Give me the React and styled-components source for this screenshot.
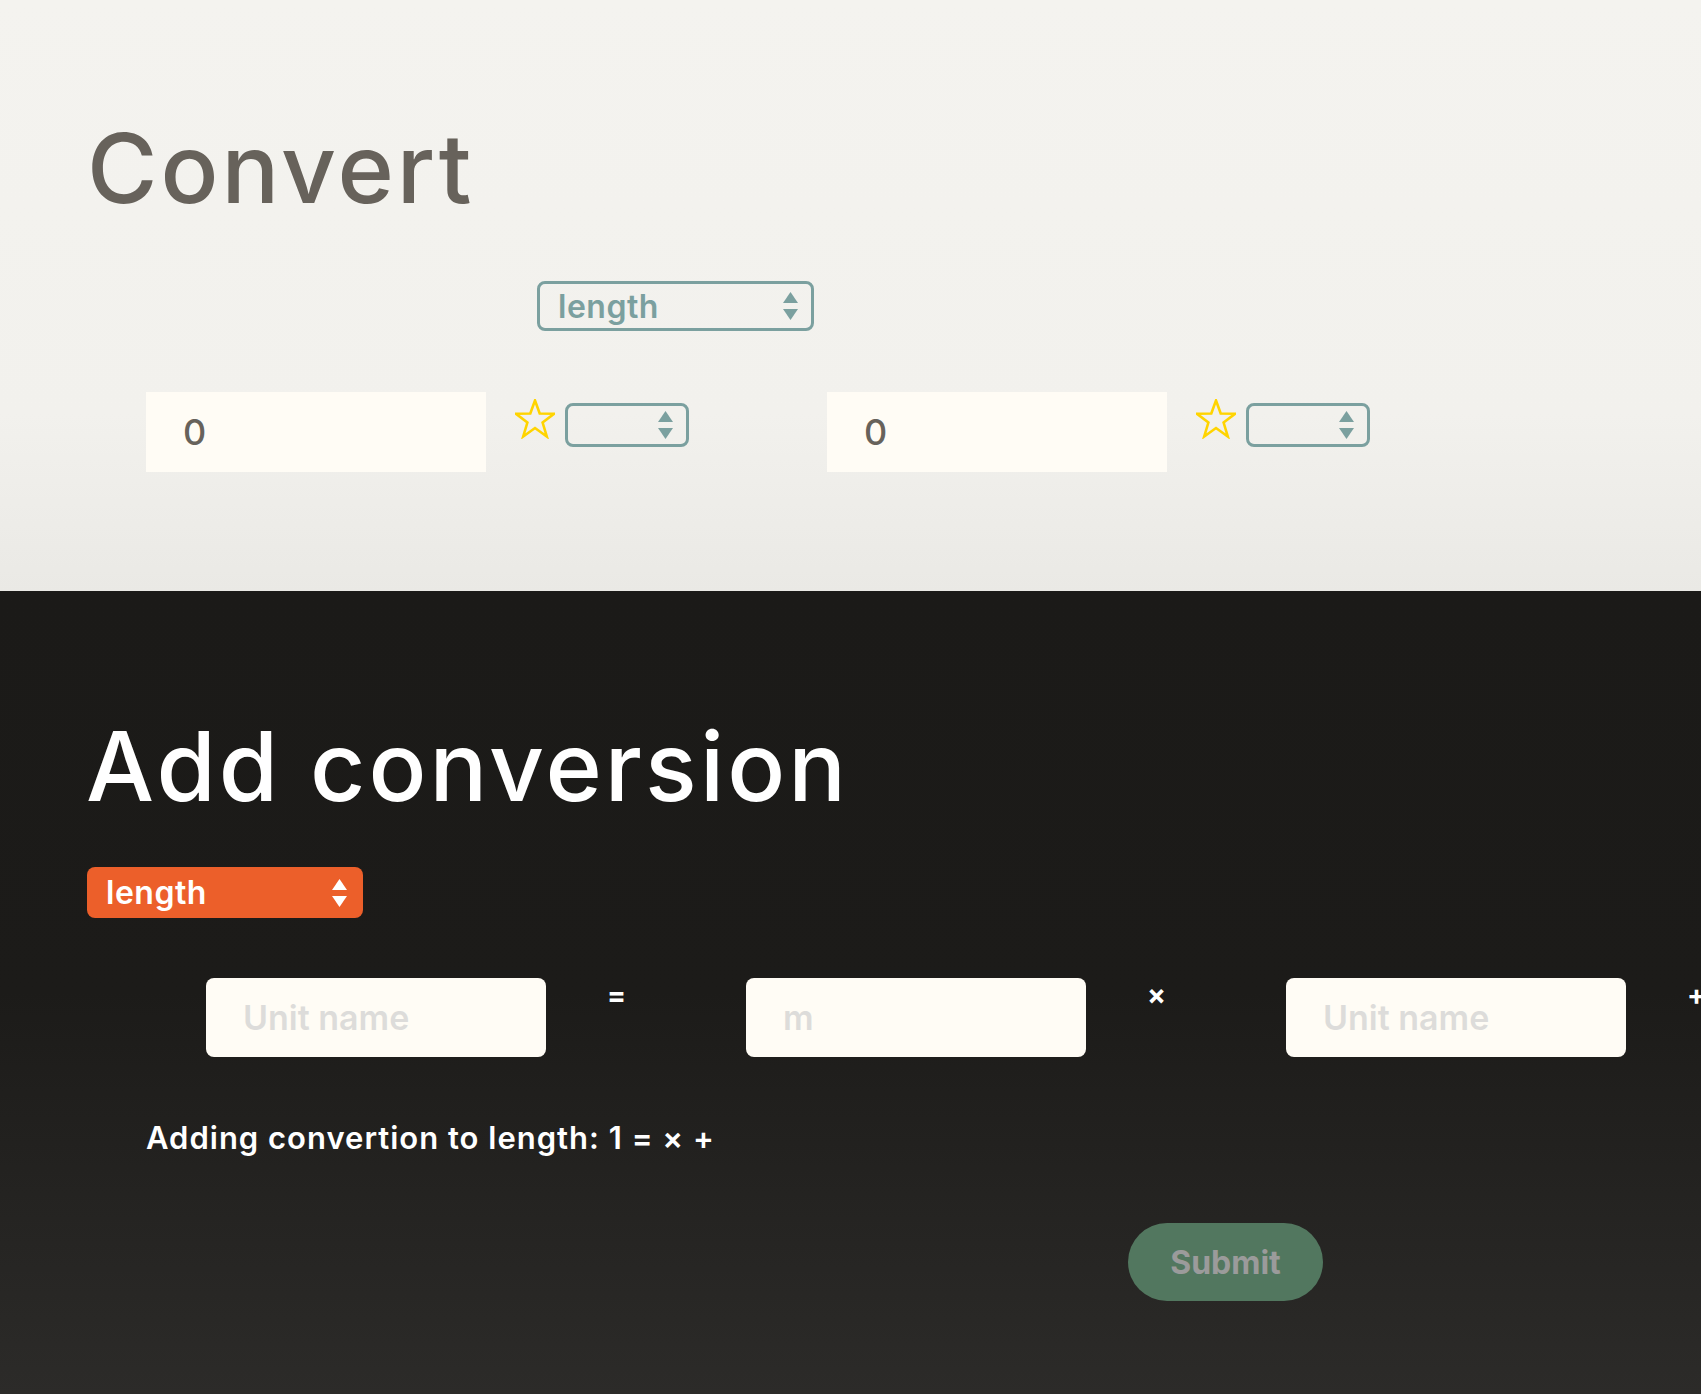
import React from "react";
import styled, { createGlobalStyle } from "styled-components";

const GlobalStyle = createGlobalStyle`
  body {
    margin: 0;
    font-family: Inter, "Noto Sans", sans-serif;
  }
  * {
    box-sizing: border-box;
  }
`;

const units = ["length", "mass", "time", "volume"];

const Star = () => (
  <StarIcon viewBox="0 0 40 40" aria-hidden="true">
    <polygon
      points="20,1.5 24.7,14.5 39,14.8 27.6,23.5 31.8,37.5 20,29 8.2,37.5 12.4,23.5 1,14.8 15.3,14.5"
      fill="none"
      stroke="#ffd400"
      strokeWidth="2.6"
      strokeLinejoin="miter"
    />
  </StarIcon>
);

const Arrows = ({ color }) => (
  <ArrowIcon viewBox="0 0 15 28" aria-hidden="true">
    <polygon points="7.5,0 15,11 0,11" fill={color} />
    <polygon points="0,17 15,17 7.5,28" fill={color} />
  </ArrowIcon>
);

const Dropdown = ({ variant = "outline", width, height, value, options = [] }) => (
  <SelectWrap $width={width} $height={height}>
    <Select $variant={variant} defaultValue={value}>
      {options.length === 0 && <option value=""></option>}
      {options.map((o) => (
        <option key={o} value={o}>
          {o}
        </option>
      ))}
    </Select>
    <Arrows color={variant === "filled" ? "#ffffff" : "#7ba09f"} />
  </SelectWrap>
);

const ConvertGroup = ({ last }) => (
  <Group $last={last}>
    <ValueInput defaultValue="0" />
    <StarButton>
      <Star />
    </StarButton>
    <Dropdown width={124} height={44} />
  </Group>
);

const App = () => {
  return (
    <>
      <GlobalStyle />
      <TopSection>
        <Heading>Convert</Heading>
        <CategoryRow>
          <Dropdown width={277} height={50} value="length" options={units} />
        </CategoryRow>
        <ConvertRow>
          <ConvertGroup />
          <ConvertGroup last />
        </ConvertRow>
      </TopSection>
      <BottomSection>
        <Heading $dark>Add conversion</Heading>
        <FilterRow>
          <Dropdown variant="filled" width={276} height={51} value="length" options={units} />
        </FilterRow>
        <ConversionRow>
          <UnitInput placeholder="Unit name" />
          <Operator>=</Operator>
          <UnitInput placeholder="m" />
          <Operator>×</Operator>
          <UnitInput placeholder="Unit name" />
          <Operator>+</Operator>
        </ConversionRow>
        <Summary>Adding convertion to length: 1 = × +</Summary>
        <SubmitButton type="button">Submit</SubmitButton>
      </BottomSection>
    </>
  );
};

export default App;

const TopSection = styled.section`
  height: 591px;
  padding: 120px 0 0 87px;
  background: linear-gradient(180deg, #f4f3ef 0%, #f2f1ed 70%, #eae9e5 100%);
`;

const BottomSection = styled.section`
  min-height: 803px;
  padding: 127px 0 93px 86px;
  background: linear-gradient(180deg, #1b1a18 0%, #1c1b19 50%, #2c2b29 100%);
  overflow: hidden;
`;

const Heading = styled.h1`
  margin: 0;
  font-size: 96px;
  line-height: 1;
  font-weight: 500;
  letter-spacing: 3.1px;
  color: ${(p) => (p.$dark ? "#ffffff" : "#67625b")};
`;

const CategoryRow = styled.div`
  margin: 65px 0 0 450px;
`;

const FilterRow = styled.div`
  margin: 53px 0 0 1px;
`;

const ConvertRow = styled.div`
  display: flex;
  margin: 61px 0 0 59px;
`;

const Group = styled.div`
  display: flex;
  align-items: flex-start;
  margin-right: ${(p) => (p.$last ? "0" : "138px")};
`;

const ValueInput = styled.input`
  width: 340px;
  height: 80px;
  padding: 0 0 0 37px;
  border: none;
  outline: none;
  background: #fffcf5;
  font-family: inherit;
  font-size: 36px;
  font-weight: 500;
  color: #67625b;
`;

const StarButton = styled.span`
  display: flex;
  margin: 7px 10px 0 29px;
`;

const StarIcon = styled.svg`
  width: 40px;
  height: 40px;
`;

const SelectWrap = styled.div`
  position: relative;
  width: ${(p) => p.$width}px;
  height: ${(p) => p.$height}px;
  margin-top: ${(p) => (p.$height === 44 ? "11px" : "0")};
`;

const Select = styled.select`
  appearance: none;
  -webkit-appearance: none;
  width: 100%;
  height: 100%;
  padding: 0 40px 0 ${(p) => (p.$variant === "filled" ? "19px" : "18px")};
  border: ${(p) => (p.$variant === "filled" ? "none" : "3px solid #7ba09f")};
  border-radius: 8px;
  background: ${(p) => (p.$variant === "filled" ? "#ec5f2a" : "transparent")};
  color: ${(p) => (p.$variant === "filled" ? "#ffffff" : "#7ba09f")};
  font-family: inherit;
  font-size: 32px;
  font-weight: 600;
  letter-spacing: 0.5px;
  outline: none;
`;

const ArrowIcon = styled.svg`
  position: absolute;
  right: 16px;
  top: 50%;
  width: 15px;
  height: 28px;
  transform: translateY(-50%);
  pointer-events: none;
`;

const ConversionRow = styled.div`
  display: flex;
  align-items: flex-start;
  margin: 60px 0 0 120px;
  width: 2000px;
`;

const UnitInput = styled.input`
  flex: none;
  width: 340px;
  height: 79px;
  padding: 0 0 0 37px;
  border: none;
  border-radius: 8px;
  outline: none;
  background: #fffcf5;
  font-family: inherit;
  font-size: 34px;
  font-weight: 600;
  color: #67625b;
  &::placeholder {
    color: #dddcda;
  }
`;

const Operator = styled.span`
  flex: none;
  width: 200px;
  padding: 3px 0 0 61px;
  font-size: 28px;
  line-height: 1;
  font-weight: 700;
  color: #ffffff;
`;

const Summary = styled.p`
  margin: 63px 0 0 60px;
  font-size: 31px;
  line-height: 36px;
  font-weight: 600;
  letter-spacing: 1px;
  color: #ffffff;
`;

const SubmitButton = styled.button`
  display: block;
  width: 195px;
  height: 78px;
  margin: 67px 0 0 1042px;
  border: none;
  border-radius: 39px;
  background: #52775f;
  color: #9b9b9b;
  font-family: inherit;
  font-size: 32px;
  font-weight: 700;
`;
